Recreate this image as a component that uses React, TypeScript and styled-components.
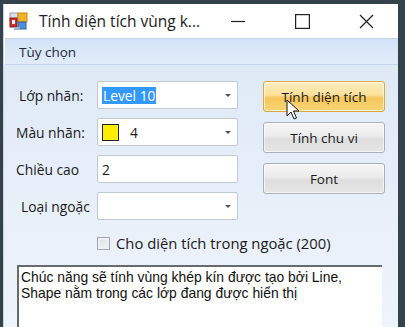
import React from "react";
import styled, { createGlobalStyle } from "styled-components";

const GlobalStyle = createGlobalStyle`
    html, body {
        margin: 0;
        padding: 0;
        background: #34424c;
        overflow: hidden;
    }
    * { box-sizing: border-box; }
`;

const uiFont = `"Open Sans", "Noto Sans", "DejaVu Sans", sans-serif`;

/* ------------------ Styled ------------------ */

const Page = styled.div`
    width: 405px;
    height: 327px;
    padding: 4px 7px 0 3px;
`;

const Window = styled.div`
    height: 100%;
    display: flex;
    flex-direction: column;
    background: #ffffff;
    border-left: 1px solid #c9d3de;
    font-family: ${uiFont};
    color: #1a1a1a;
`;

const TitleBar = styled.div`
    height: 34px;
    display: flex;
    align-items: center;
    padding-left: 5px;
    background: #ffffff;
`;

const TitleText = styled.span`
    margin-left: 11px;
    font-size: 15.5px;
    color: #202020;
    flex: 1;
`;

const Controls = styled.div`
    display: flex;
    align-items: center;
`;

const ControlBtn = styled.div`
    width: 64px;
    height: 34px;
    display: flex;
    align-items: center;
    justify-content: center;
`;

const MenuBar = styled.div`
    height: 27px;
    display: flex;
    align-items: center;
    padding-left: 14px;
    margin-left: 1px;
    background: linear-gradient(#d3e3f6, #e2ecf9);
    border-top: 1px solid #c6d6ea;
    border-bottom: 1px solid #c4d5ea;
    font-size: 13.5px;
    color: #1e2a3a;
`;

const Body = styled.div`
    flex: 1;
    display: flex;
    flex-direction: column;
    padding: 16px 14px 0 12px;
    background: linear-gradient(#dfeaf7, #eaf1fa 70%, #eef4fb);
`;

const TopArea = styled.div`
    display: flex;
`;

const Form = styled.div`
    display: flex;
    flex-direction: column;
    gap: 9px;
    width: 222px;
`;

const Row = styled.div`
    display: flex;
    align-items: center;
    height: 28px;
`;

const Label = styled.span<{ $indent: number }>`
    width: 81px;
    padding-left: ${(p) => p.$indent}px;
    font-size: 13.8px;
    color: #1a1a1a;
    white-space: nowrap;
`;

const Field = styled.div`
    width: 141px;
    height: 28px;
    display: flex;
    align-items: center;
    padding: 0 4px;
    background: #ffffff;
    border: 1px solid #c3c9d1;
    border-radius: 2px;
    font-size: 13.8px;
`;

const FieldValue = styled.span`
    flex: 1;
    display: flex;
    align-items: center;
`;

const Selected = styled.span`
    background: #3399ff;
    color: #ffffff;
    padding: 0 1px;
    line-height: 17px;
`;

const Swatch = styled.span<{ $color: string }>`
    width: 17px;
    height: 17px;
    margin-right: 11px;
    background: ${(p) => p.$color};
    border: 1px solid #222;
`;

const Arrow = styled.span`
    width: 0;
    height: 0;
    margin-right: 2px;
    border-left: 3px solid transparent;
    border-right: 3px solid transparent;
    border-top: 3px solid #555;
`;

const Buttons = styled.div`
    margin-left: 25px;
    display: flex;
    flex-direction: column;
    gap: 10px;
`;

const Button = styled.div<{ $hot?: boolean }>`
    position: relative;
    width: 122px;
    height: 31px;
    display: flex;
    align-items: center;
    justify-content: center;
    font-size: 13.5px;
    color: #1a1a1a;
    border-radius: 3px;
    border: 1px solid ${(p) => (p.$hot ? "#d6a84a" : "#a9afb6")};
    background: ${(p) =>
        p.$hot
            ? "linear-gradient(#fdeebd, #fbe19a 45%, #f6c65b 55%, #f8d576)"
            : "linear-gradient(#f6f6f6, #ececec 45%, #dedede 55%, #e6e6e6)"};
    box-shadow: inset 0 0 0 1px rgba(255, 255, 255, 0.6);
`;

const Cursor = styled.svg`
    position: absolute;
    left: 22px;
    top: 17px;
`;

const CheckRow = styled.div`
    display: flex;
    align-items: center;
    margin: 13px 0 0 81px;
    font-size: 14.8px;
`;

const CheckBox = styled.span`
    width: 13px;
    height: 13px;
    margin-right: 6px;
    border: 1px solid #a3a9b0;
    background: linear-gradient(135deg, #d8dde3, #f4f6f8);
    box-shadow: inset 0 0 0 2px #eef1f4;
`;

const Notes = styled.div`
    flex: 1;
    margin: 12px 2px 0 1px;
    padding: 2px 2px;
    background: #ffffff;
    border-top: 2px solid #6a6a6a;
    border-left: 2px solid #6a6a6a;
    font-family: "Liberation Sans", Arial, sans-serif;
    font-size: 13.9px;
    line-height: 16px;
    color: #111;
`;

/* ------------------ Component ------------------ */

const AppIcon = () => (
    <svg width="19" height="19" viewBox="0 0 19 19">
        <rect x="1" y="1" width="8" height="8" fill="#d8dfe8" stroke="#9aa6b3" />
        <rect x="9" y="1" width="9" height="9" fill="#f0b22a" stroke="#c98a10" />
        <rect x="1" y="6" width="7" height="9" fill="#c9302c" stroke="#8e1c1a" />
        <rect x="3" y="8" width="3" height="4" fill="#f3f3f3" />
        <rect x="9" y="10" width="8" height="7" fill="#4f8fd6" stroke="#2f66a8" />
        <rect x="5" y="15" width="6" height="3" fill="#9fb2c6" />
    </svg>
);

const fields = [
    { label: "Lớp nhãn:", indent: 3, combo: true, value: <Selected>Level 10</Selected> },
    {
        label: "Màu nhãn:",
        indent: 0,
        combo: true,
        value: (
            <>
                <Swatch $color="#ffee00" />4
            </>
        ),
    },
    { label: "Chiều cao", indent: 0, combo: false, value: <>2</> },
    { label: "Loại ngoặc", indent: 5, combo: true, value: null },
];

export default function App() {
    return (
        <>
            <GlobalStyle />
            <Page>
                <Window>
                    <TitleBar>
                        <AppIcon />
                        <TitleText>Tính diện tích vùng k...</TitleText>
                        <Controls>
                            <ControlBtn>
                                <svg width="14" height="14" viewBox="0 0 14 14">
                                    <line x1="0" y1="7.5" x2="14" y2="7.5" stroke="#222" strokeWidth="1.2" />
                                </svg>
                            </ControlBtn>
                            <ControlBtn>
                                <svg width="15" height="15" viewBox="0 0 15 15">
                                    <rect x="0.6" y="0.6" width="13.8" height="13.8" fill="none" stroke="#222" strokeWidth="1.2" />
                                </svg>
                            </ControlBtn>
                            <ControlBtn>
                                <svg width="15" height="15" viewBox="0 0 15 15">
                                    <path d="M1 1 L14 14 M14 1 L1 14" stroke="#222" strokeWidth="1.3" />
                                </svg>
                            </ControlBtn>
                        </Controls>
                    </TitleBar>
                    <MenuBar>Tùy chọn</MenuBar>
                    <Body>
                        <TopArea>
                            <Form>
                                {fields.map((f) => (
                                    <Row key={f.label}>
                                        <Label $indent={f.indent}>{f.label}</Label>
                                        <Field>
                                            <FieldValue>{f.value}</FieldValue>
                                            {f.combo && <Arrow />}
                                        </Field>
                                    </Row>
                                ))}
                            </Form>
                            <Buttons>
                                <Button $hot>
                                    Tính diện tích
                                    <Cursor width="14" height="22" viewBox="0 0 14 22">
                                        <path
                                            d="M1 1 L1 17 L5 13 L8 20 L10.5 19 L7.5 12 L13 12 Z"
                                            fill="#ffffff"
                                            stroke="#111"
                                            strokeWidth="1"
                                            strokeLinejoin="round"
                                        />
                                    </Cursor>
                                </Button>
                                <Button>Tính chu vi</Button>
                                <Button>Font</Button>
                            </Buttons>
                        </TopArea>
                        <CheckRow>
                            <CheckBox />
                            Cho diện tích trong ngoặc (200)
                        </CheckRow>
                        <Notes>
                            Chúc năng sẽ tính vùng khép kín được tạo bởi Line,
                            <br />
                            Shape nằm trong các lớp đang được hiển thị
                        </Notes>
                    </Body>
                </Window>
            </Page>
        </>
    );
}
